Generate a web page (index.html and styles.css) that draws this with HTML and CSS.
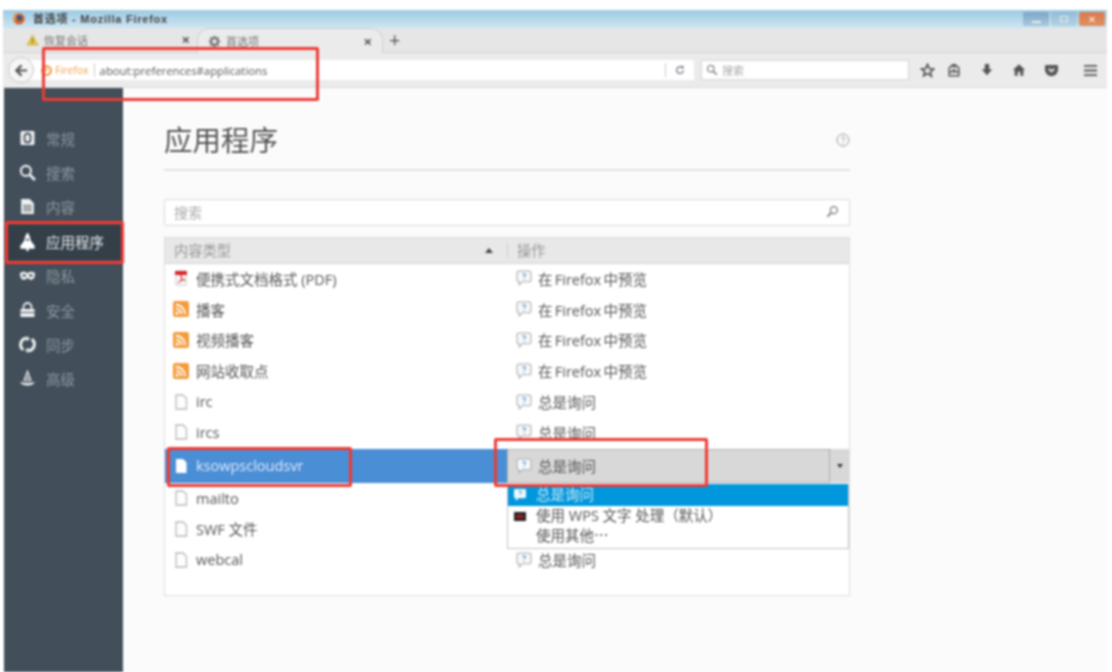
FILE: index.html
```html
<!DOCTYPE html>
<html lang="zh">
<head>
<meta charset="utf-8">
<title>首选项 - Mozilla Firefox</title>
<link rel="stylesheet" href="styles.css">
</head>
<body>
<svg class="defs" width="0" height="0">
  <symbol id="doc" viewBox="0 0 14 16"><path d="M2 1h7l3.500 3.500V15H2z" fill="#fdfdfd" stroke="#b9b9b9" stroke-width="1.300"/></symbol>
  <symbol id="docw" viewBox="0 0 14 16"><path d="M2 1h7l3.500 3.500V15H2z" fill="#fff"/></symbol>
  <symbol id="rss" viewBox="0 0 14 14"><rect width="14" height="14" rx="2" fill="#f49a3a"/><circle cx="3.600" cy="10.600" r="1.500" fill="#fff"/><path d="M2.400 6.600a5 5 0 0 1 5 5M2.400 3.300a8.300 8.300 0 0 1 8.300 8.300" fill="none" stroke="#fff" stroke-width="1.600"/></symbol>
  <symbol id="pdf" viewBox="0 0 14 16"><path d="M2 1h10v14H2z" fill="#fff" stroke="#c4c4c4"/><path d="M1 1h12v4H1z" fill="#d8262c"/><path d="M4 13c2-1 4-5 3-8 0 3 2 5 4 5-3 0-5 1-7 3z" fill="none" stroke="#d8262c"/></symbol>
  <symbol id="ask" viewBox="0 0 15 15"><path d="M2.500 1h10A1.500 1.500 0 0 1 14 2.500v7a1.500 1.500 0 0 1-1.500 1.500H6l-3 3v-3h-.5A1.500 1.500 0 0 1 1 9.500v-7A1.500 1.500 0 0 1 2.500 1z" fill="#f7f9fb" stroke="#a9a9a9"/><path d="M6 4.300c.4-1.200 3-1.200 3 .3 0 1-1.400 1.100-1.400 2.200M7.600 8.200v1" fill="none" stroke="#5b8fc6"/></symbol>
  <symbol id="askw" viewBox="0 0 15 15"><path d="M2.500 1h10A1.500 1.500 0 0 1 14 2.500v7a1.500 1.500 0 0 1-1.500 1.500H6l-3 3v-3h-.5A1.500 1.500 0 0 1 1 9.500v-7A1.500 1.500 0 0 1 2.500 1z" fill="#eef6fb"/><path d="M6 4.300c.4-1.200 3-1.200 3 .3 0 1-1.400 1.100-1.400 2.200" fill="none" stroke="#0097dc"/></symbol>
</svg>

<div class="window">
  <header class="titlebar">
    <svg class="fx" viewBox="0 0 16 16" width="14" height="14"><circle cx="8" cy="9" r="6.500" fill="#d9662a"/><circle cx="8.500" cy="8" r="3.200" fill="#36548e"/><path d="M3 3c1 3 0 5 1 8" stroke="#e8a13a" stroke-width="2" fill="none"/></svg>
    <span class="wintitle">首选项 - Mozilla Firefox</span>
    <div class="winbtns">
      <span class="wb"><i class="wb-min"></i></span>
      <span class="wb"><i class="wb-max"></i></span>
      <span class="wb wb-close">×</span>
    </div>
  </header>

  <div class="tabbar">
    <div class="tab">
      <svg viewBox="0 0 14 13" width="13" height="12"><path d="M7 1l6 11H1z" fill="#e9c63f" stroke="#b9a02e" stroke-width=".6"/><path d="M7 5v3.500M7 9.500v1" stroke="#444"/></svg>
      <span class="tab-label">恢复会话</span>
      <span class="tab-x">×</span>
    </div>
    <div class="tab tab-active">
      <svg viewBox="0 0 14 14" width="13" height="13"><circle cx="7" cy="7" r="3.600" fill="none" stroke="#666" stroke-width="2"/><path d="M7 .8v2.400M7 10.800v2.400M.8 7h2.400M10.800 7h2.400M2.600 2.600l1.700 1.700M9.700 9.700l1.700 1.700M2.600 11.400l1.700-1.700M9.700 4.300l1.700-1.700" stroke="#666" stroke-width="1.700"/></svg>
      <span class="tab-label">首选项</span>
      <span class="tab-x">×</span>
    </div>
    <span class="tab-new">+</span>
  </div>

  <div class="navbar">
    <span class="back"><svg viewBox="0 0 14 14" width="13" height="13"><path d="M7 1.500L1.500 7 7 12.500M2 7h11" fill="none" stroke="#555" stroke-width="2.400"/></svg></span>
    <div class="urlbar">
      <svg class="fx-mark" viewBox="0 0 12 12" width="11" height="11"><circle cx="6" cy="6" r="4.800" fill="none" stroke="#f08a1d" stroke-width="2"/><path d="M6 3v3.500" stroke="#f08a1d" stroke-width="1.500"/></svg>
      <span class="ff">Firefox</span>
      <span class="url">about:preferences#applications</span>
      <span class="reload"><svg viewBox="0 0 12 12" width="10" height="10"><path d="M10 6.500A4 4 0 1 1 8.500 3" fill="none" stroke="#667" stroke-width="1.400"/><path d="M7 1l3.500.5L9.500 5z" fill="#667"/></svg></span>
    </div>
    <div class="searchbar">
      <svg viewBox="0 0 14 14" width="12" height="12"><circle cx="5.500" cy="5.500" r="3.800" fill="none" stroke="#888" stroke-width="1.500"/><path d="M8.500 8.500l4 4" stroke="#888" stroke-width="2"/></svg>
      <span>搜索</span>
    </div>
    <div class="tools">
      <svg class="t-star" viewBox="0 0 16 16" width="15" height="15"><path d="M8 1.500l1.900 4.400 4.700.4-3.600 3.100 1.100 4.700L8 11.100l-4.100 2.500L5 8.900 1.400 6.300l4.700-.4z" fill="none" stroke="#555" stroke-width="1.800"/></svg>
      <svg class="t-bag" viewBox="0 0 16 16" width="14" height="15"><path d="M5 3.500h6a2.500 2.500 0 0 1 2.500 2.500v8h-11V6A2.500 2.500 0 0 1 5 3.500zM6 3.500V1.500h4v2M2.500 9.500h11M6 7.500h4" fill="none" stroke="#555" stroke-width="1.700"/></svg>
      <svg class="t-down" viewBox="0 0 16 16" width="14" height="14"><path d="M5.500 1h5v6H14l-6 7-6-7h3.500z" fill="#555"/></svg>
      <svg class="t-home" viewBox="0 0 16 16" width="14" height="14"><path d="M8 1.500L15 8h-2v6.500H9.500V10h-3v4.500H3V8H1z" fill="#555"/></svg>
      <svg class="t-pocket" viewBox="0 0 16 16" width="15" height="15"><path d="M2.500 2h11A1.500 1.500 0 0 1 15 3.500V7a7 7 0 0 1-14 0V3.500A1.500 1.500 0 0 1 2.500 2z" fill="#555"/><path d="M5 6l3 3 3-3" fill="none" stroke="#eee" stroke-width="1.800"/></svg>
      <svg class="t-menu" viewBox="0 0 16 14" width="15" height="13"><path d="M1 2h14M1 7h14M1 12h14" stroke="#555" stroke-width="2"/></svg>
    </div>
  </div>

  <div class="body">
    <nav class="sidebar">
      <div class="side-item">
        <svg viewBox="0 0 16 16" width="16" height="16"><rect x="1" y="1" width="14" height="14" rx="1.500" fill="#eef0f1"/><rect x="5" y="3.500" width="6" height="9" rx="3" fill="none" stroke="#4a5660" stroke-width="1.800"/></svg>
        <span>常规</span>
      </div>
      <div class="side-item">
        <svg viewBox="0 0 16 16" width="17" height="17"><circle cx="6.500" cy="6.500" r="4.700" fill="none" stroke="#eef0f1" stroke-width="2"/><path d="M10 10l5 5" stroke="#eef0f1" stroke-width="2.600"/></svg>
        <span>搜索</span>
      </div>
      <div class="side-item">
        <svg viewBox="0 0 16 16" width="16" height="17"><path d="M2 1h8l4 4v10H2z" fill="#eef0f1"/><path d="M4 7h8M4 9.500h8M4 12h8" stroke="#4a5660"/></svg>
        <span>内容</span>
      </div>
      <div class="side-item side-active">
        <svg viewBox="1 0 14 16" width="16" height="19"><path d="M8 .5c1.500 2 2.500 4.500 2.500 6.500l3.500 4.500v2.500H2v-2.500L5.500 7C5.500 5 6.500 2.500 8 .5z" fill="#fff"/><circle cx="8" cy="6.500" r="1" fill="#343f48"/><path d="M7 13.500h2V16H7z" fill="#fff"/></svg>
        <span>应用程序</span>
      </div>
      <div class="side-item">
        <svg viewBox="0 0 18 12" width="17" height="12"><path d="M1 3c3-2 5-2 8 0 3-2 5-2 8 0 0 5-2 7-4.500 7-2 0-2.500-2-3.500-2s-1.500 2-3.500 2C3 10 1 8 1 3z" fill="#eef0f1"/><ellipse cx="5.500" cy="5.500" rx="2" ry="1.300" fill="#4a5660"/><ellipse cx="12.500" cy="5.500" rx="2" ry="1.300" fill="#4a5660"/></svg>
        <span>隐私</span>
      </div>
      <div class="side-item">
        <svg viewBox="0 0 16 16" width="16" height="16"><path d="M4 7V5a4 4 0 0 1 8 0v2" fill="none" stroke="#eef0f1" stroke-width="1.800"/><path d="M1 7h14v8H1z" fill="#eef0f1"/><path d="M1 10.500h14" stroke="#4a5660"/></svg>
        <span>安全</span>
      </div>
      <div class="side-item">
        <svg viewBox="0 0 16 16" width="16" height="17"><path d="M7 2.200A6 6 0 0 0 4 13M9 13.800A6 6 0 0 0 12 3" fill="none" stroke="#eef0f1" stroke-width="2.800"/><path d="M7 0l3.500 2.500L7 5zM9 16l-3.500-2.500L9 11z" fill="#eef0f1"/></svg>
        <span>同步</span>
      </div>
      <div class="side-item">
        <svg viewBox="0 0 18 16" width="17" height="17"><path d="M9 .5l3.500 9.500h-7z" fill="none" stroke="#eef0f1" stroke-width="1.400"/><path d="M1 11.500c1 2.500 4 4 8 4s7-1.500 8-4c-3 1.500-13 1.500-16 0z" fill="#eef0f1"/><circle cx="9" cy="7" r="1.200" fill="#eef0f1"/></svg>
        <span>高级</span>
      </div>
    </nav>

    <main class="content">
      <div class="page-head">
        <h1>应用程序</h1>
        <svg class="help" viewBox="0 0 14 14" width="14" height="14"><circle cx="7" cy="7" r="6" fill="none" stroke="#999"/><path d="M5.200 5.500c.2-1.800 3.600-1.800 3.600 0 0 1.300-1.800 1.300-1.800 2.800M7 9.500v1.200" fill="none" stroke="#999"/></svg>
      </div>
      <div class="filter">
        <span>搜索</span>
        <svg viewBox="0 0 14 14" width="13" height="13"><circle cx="8.500" cy="5.500" r="3.800" fill="none" stroke="#777" stroke-width="1.300"/><path d="M5.500 8.500l-4 4" stroke="#777" stroke-width="1.800"/></svg>
      </div>

      <section class="table">
        <div class="thead">
          <div class="th th-type"><span>内容类型</span><i class="sort"></i></div>
          <div class="th th-action"><span>操作</span></div>
        </div>
        <div class="tbody">
          <div class="row"><div class="cell"><svg class="ic"><use href="#pdf"/></svg>便携式文档格式 (PDF)</div><div class="cell"><svg class="ic"><use href="#ask"/></svg>在 Firefox 中预览</div></div>
          <div class="row"><div class="cell"><svg class="ic"><use href="#rss"/></svg>播客</div><div class="cell"><svg class="ic"><use href="#ask"/></svg>在 Firefox 中预览</div></div>
          <div class="row"><div class="cell"><svg class="ic"><use href="#rss"/></svg>视频播客</div><div class="cell"><svg class="ic"><use href="#ask"/></svg>在 Firefox 中预览</div></div>
          <div class="row"><div class="cell"><svg class="ic"><use href="#rss"/></svg>网站收取点</div><div class="cell"><svg class="ic"><use href="#ask"/></svg>在 Firefox 中预览</div></div>
          <div class="row"><div class="cell"><svg class="ic"><use href="#doc"/></svg>irc</div><div class="cell"><svg class="ic"><use href="#ask"/></svg>总是询问</div></div>
          <div class="row"><div class="cell"><svg class="ic"><use href="#doc"/></svg>ircs</div><div class="cell"><svg class="ic"><use href="#ask"/></svg>总是询问</div></div>
          <div class="row row-sel">
            <div class="cell"><svg class="ic"><use href="#docw"/></svg>ksowpscloudsvr</div>
            <div class="select">
              <div class="select-val"><svg class="ic"><use href="#ask"/></svg>总是询问</div>
              <div class="select-arrow"><i></i></div>
            </div>
          </div>
          <div class="row"><div class="cell"><svg class="ic"><use href="#doc"/></svg>mailto</div></div>
          <div class="row"><div class="cell"><svg class="ic"><use href="#doc"/></svg>SWF 文件</div></div>
          <div class="row"><div class="cell"><svg class="ic"><use href="#doc"/></svg>webcal</div><div class="cell"><svg class="ic"><use href="#ask"/></svg>总是询问</div></div>
        </div>
      </section>
    </main>
  </div>

  <div class="menu">
    <div class="menu-item menu-on"><svg class="ic"><use href="#askw"/></svg>总是询问</div>
    <div class="menu-item"><svg class="ic" viewBox="0 0 14 14"><rect x="1" y="3" width="12" height="9" fill="#222"/><rect x="3" y="5.500" width="8" height="4" fill="#8e2026"/></svg>使用 WPS 文字 处理（默认）</div>
    <div class="menu-item"><span class="ic"></span>使用其他⋯</div>
  </div>
</div>

<i class="mark mark-url"></i>
<i class="mark mark-side"></i>
<i class="mark mark-row"></i>
<i class="mark mark-sel"></i>
</body>
</html>
```

FILE: styles.css
```css
* { box-sizing: border-box; }
html, body { margin: 0; height: 100%; background: #fff; overflow: hidden; }
body {
  font-family: "Open Sans", "Noto Sans CJK SC", sans-serif;
  color: #555;
  filter: blur(0.8px);
}
.defs { position: absolute; }

.window {
  position: relative;
  margin: 10px 5px 0 3px;
  height: 662px;
  display: flex;
  flex-direction: column;
}

.titlebar {
  height: 18px;
  flex: none;
  display: flex;
  align-items: center;
  padding: 0 0 3px 9px;
  background: linear-gradient(#9ccae2, #cfe5f3);
}
.fx { margin-right: 7px; }
.wintitle { font-size: 11px; font-weight: 700; color: #444; font-family: "Liberation Sans", "Noto Sans CJK SC", sans-serif; letter-spacing: .75px; }
.winbtns { margin-left: auto; margin-right: 2px; display: flex; gap: 2px; align-self: flex-start; padding-top: 2px; }
.wb { width: 26px; height: 14px; border-radius: 2px; background: linear-gradient(#7ea6c8, #a9c8dc); display: flex; align-items: center; justify-content: center; }
.wb + .wb { background: linear-gradient(#93bcd6, #b4d2e2); }
.wb.wb-close { background: linear-gradient(#d97a50, #e0915f); color: #fff; font-size: 13px; line-height: 14px; }
.wb-min { width: 9px; height: 2px; background: #e8eef3; margin-top: 5px; }
.wb-max { width: 8px; height: 6px; border: 1px solid #e8eef3; }

.tabbar {
  height: 25px;
  flex: none;
  display: flex;
  align-items: stretch;
  background: #e6e6e6;
  border-bottom: 1px solid #d2d2d2;
  padding-left: 23px;
}
.tab {
  display: flex;
  align-items: center;
  width: 164px;
  font-size: 11px;
  color: #777;
  padding-bottom: 1px;
}
.tab svg { flex: none; margin-right: 5px; }
.tab-label { flex: 1; }
.tab-x { font-size: 15px; color: #555; font-weight: 700; line-height: 1; }
.tab-active {
  width: 186px;
  margin-left: 7px;
  padding: 0 10px 0 10px;
  background: #ebebeb;
  border: 1px solid #cfcfcf;
  border-bottom: 0;
  border-radius: 12px 12px 0 0;
  margin-bottom: -1px;
}
.tab-new { margin-left: 6px; font-size: 20px; color: #555; line-height: 24px; }

.navbar {
  height: 35px;
  flex: none;
  display: flex;
  align-items: center;
  background: #ebebeb;
  border-bottom: 1px solid #dcdcdc;
  padding-left: 5px;
  position: relative;
}
.back {
  width: 26px;
  height: 26px;
  flex: none;
  border-radius: 50%;
  background: #f6f6f6;
  border: 1px solid #c8c8c8;
  display: flex;
  align-items: center;
  justify-content: center;
  z-index: 1;
}
.urlbar {
  margin-left: -4px;
  width: 664px;
  height: 20px;
  flex: none;
  display: flex;
  align-items: center;
  background: #fff;
  padding-left: 11px;
  font-size: 10px;
}
.fx-mark { flex: none; margin-right: 3px; }
.ff { color: #f0a050; padding-right: 5px; border-right: 1px solid #ccc; line-height: 14px; font-size: 10.500px; }
.url { margin-left: 5px; font-size: 11.300px; color: #555; }
.reload {
  margin-left: auto;
  width: 29px;
  border-left: 1px solid #ccc;
  height: 14px;
  display: flex;
  align-items: center;
  justify-content: center;
}
.searchbar {
  margin-left: 7px;
  width: 208px;
  height: 20px;
  flex: none;
  background: #fff;
  border: 1px solid #d6d6d6;
  display: flex;
  align-items: center;
  padding-left: 4px;
  gap: 4px;
  font-size: 11px;
  color: #aaa;
}
.tools { display: flex; align-items: center; margin-left: 11px; }
.t-bag { margin-left: 12px; }
.t-down { margin-left: 19px; }
.t-home { margin-left: 18px; }
.t-pocket { margin-left: 18px; }
.t-menu { margin-left: 24px; }

.body { flex: 1; display: flex; min-height: 0; background: #fbfbfb; }
.sidebar {
  width: 119px;
  flex: none;
  margin-left: 1px;
  background: #424f5a;
  padding-top: 34px;
}
.side-item {
  height: 34.400px;
  display: flex;
  align-items: center;
  padding: 0 0 2px 15px;
  font-size: 14.500px;
  color: #8b959d;
}
.side-item svg { width: 17px; flex: none; margin-right: 10px; }
.side-active { background: #343f48; color: #e6e9eb; }

.content { width: 686px; margin-left: 41px; padding-top: 33px; }
.page-head {
  height: 50px;
  display: flex;
  align-items: center;
  justify-content: space-between;
  border-bottom: 2px solid #e2e2e2;
  padding: 0 0 11px;
}
.page-head h1 { margin: 0; font-size: 28.500px; font-weight: 400; line-height: 40px; color: #555; }
.filter {
  margin-top: 28px;
  height: 27px;
  background: #fff;
  border: 1px solid #d8d8d8;
  border-radius: 2px;
  display: flex;
  align-items: center;
  justify-content: space-between;
  padding: 0 10px 2px 9px;
  font-size: 14px;
  color: #aaa;
}

.table { margin-top: 11px; border: 1px solid #dcdcdc; height: 359px; background: #fff; }
.thead { height: 26px; display: flex; background: #e8e8e8; border-bottom: 1px solid #d4d4d4; }
.th { display: flex; align-items: center; font-size: 14.250px; color: #999; padding-bottom: 3px; }
.th-type { width: 342px; padding: 0 14px 3px 9px; justify-content: space-between; }
.sort { width: 0; height: 0; border: 4px solid transparent; border-top: 0; border-bottom: 5px solid #444; margin-top: 3px; }
.th-action { flex: 1; position: relative; padding-left: 10px; }
.th-action::before { content: ""; position: absolute; left: 0; top: 5px; bottom: 5px; border-left: 1px solid #ccc; }

.row { height: 30.800px; display: flex; align-items: center; font-size: 14.500px; color: #555; padding-bottom: 2px; }
.row-sel ~ .row { padding-bottom: 0; }
.cell { display: flex; align-items: center; }
.cell:first-child { width: 342px; padding-left: 8px; }
.cell:nth-child(2) { padding-left: 9px; word-spacing: -1.500px; }
.ic { width: 16px; height: 16px; flex: none; margin-right: 7px; }
.cell:nth-child(2) .ic { margin-right: 6px; }
.row-sel { height: 34px; background: #4a8ed6; align-items: stretch; padding-bottom: 0; }
.row-sel .cell { color: #dfeafb; }
.select { flex: 1; display: flex; color: #555; }
.select-val {
  width: 323px;
  display: flex;
  align-items: center;
  padding-left: 8px;
  background: #d8d8d8;
  border: 1px dotted #888;
}
.select-val .ic { margin-right: 6px; }
.select-arrow { flex: 1; background: #d8d8d8; display: flex; align-items: center; justify-content: center; }
.select-arrow i { width: 0; height: 0; border: 3.500px solid transparent; border-bottom: 0; border-top: 4px solid #333; }

.menu {
  position: absolute;
  left: 504px;
  top: 474px;
  width: 342px;
  background: #fff;
  border: 1px solid #c4c4c4;
  border-top: 0;
  font-size: 14.500px;
  color: #555;
  padding-bottom: 2px;
}
.menu-item { height: 20px; display: flex; align-items: center; padding-left: 5px; line-height: 20px; }
.menu-on { height: 22px; background: #0097dc; color: #cbe8f7; }
.menu .ic { width: 14px; height: 14px; margin-right: 9px; }

.mark { position: absolute; border: 3px solid #ef3a34; border-radius: 2px; }
.mark-url { left: 42px; top: 47px; width: 277px; height: 54px; }
.mark-side { left: 5px; top: 221px; width: 119px; height: 43px; }
.mark-row { left: 167px; top: 447px; width: 185px; height: 40px; }
.mark-sel { left: 494px; top: 438px; width: 214px; height: 49px; }
```
